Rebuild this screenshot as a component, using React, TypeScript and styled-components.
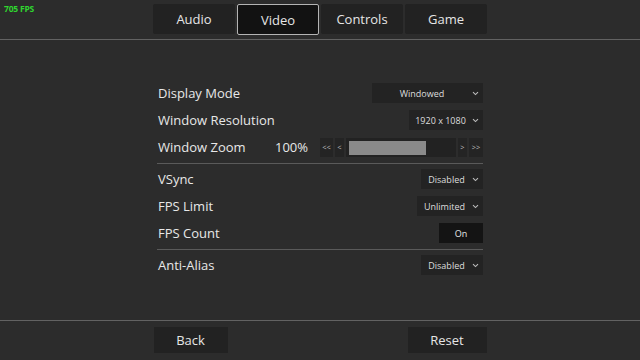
import React from "react";
import styled, { createGlobalStyle } from "styled-components";

const GlobalStyle = createGlobalStyle`
  html, body { margin: 0; padding: 0; background: #2c2c2c; }
  body { font-family: "Open Sans", "Noto Sans", sans-serif; color: #e6e6e6; }
  * { box-sizing: border-box; }
`;

const Screen = styled.div`
  position: relative;
  width: 640px;
  height: 360px;
  display: flex;
  flex-direction: column;
  background: #2c2c2c;
  overflow: hidden;
`;

const FpsCounter = styled.div`
  position: absolute;
  top: 3px;
  left: 4px;
  font-size: 8.5px;
  font-weight: 700;
  color: #2fd62f;
  letter-spacing: -0.2px;
`;

const Header = styled.header`
  height: 40px;
  padding-top: 4px;
  display: flex;
  justify-content: center;
  align-items: flex-start;
  gap: 2px;
  border-bottom: 1px solid #626262;
`;

const Tab = styled.div<{ $active?: boolean }>`
  width: 82px;
  height: ${(p) => (p.$active ? "31px" : "30px")};
  display: flex;
  align-items: center;
  justify-content: center;
  font-size: 13px;
  color: #e6e6e6;
  background: ${(p) => (p.$active ? "#121212" : "#222222")};
  border: ${(p) => (p.$active ? "1px solid #b4b4b4" : "1px solid transparent")};
  border-radius: 2px;
`;

const Main = styled.main`
  flex: 1;
  display: flex;
  align-items: center;
  justify-content: center;
  padding-bottom: 2px;
`;

const SettingsList = styled.div`
  width: 326px;
  display: flex;
  flex-direction: column;
`;

const Row = styled.div`
  height: 27px;
  display: flex;
  align-items: center;
`;

const Label = styled.span`
  flex: 1;
  font-size: 13px;
  color: #e8e8e8;
  padding-left: 1px;
`;

const Separator = styled.div`
  height: 1px;
  margin: 2px 0;
  background: #5a5a5a;
`;

const Dropdown = styled.div<{ $width: number }>`
  width: ${(p) => p.$width}px;
  height: 20px;
  display: flex;
  align-items: center;
  background: #232323;
  padding-right: 4px;
`;

const DropdownValue = styled.span`
  flex: 1;
  text-align: center;
  font-size: 9px;
  color: #dedede;
`;

const Chevron = styled.svg`
  width: 7px;
  height: 5px;
  flex: none;
`;

const ToggleButton = styled.div`
  width: 44px;
  height: 20px;
  display: flex;
  align-items: center;
  justify-content: center;
  font-size: 9px;
  background: #141414;
  color: #e6e6e6;
`;

const Percent = styled.span`
  font-size: 13px;
  color: #e8e8e8;
  margin-right: 12px;
`;

const ZoomControls = styled.div`
  display: flex;
  align-items: center;
  gap: 2px;
`;

const StepButton = styled.div<{ $width: number }>`
  width: ${(p) => p.$width}px;
  height: 19px;
  display: flex;
  align-items: center;
  justify-content: center;
  font-size: 7.5px;
  color: #bdbdbd;
  background: #242424;
`;

const Track = styled.div`
  width: 110px;
  height: 19px;
  padding: 3px 2px 2px 3px;
  background: #222222;
  display: flex;
`;

const Fill = styled.div`
  height: 100%;
  background: #8a8a8a;
`;

const Footer = styled.footer`
  height: 40px;
  border-top: 1px solid #626262;
  display: flex;
  justify-content: center;
  padding-top: 6px;
`;

const FooterInner = styled.div`
  width: 333px;
  display: flex;
  justify-content: space-between;
  align-items: flex-start;
`;

const FooterButton = styled.div<{ $width: number }>`
  width: ${(p) => p.$width}px;
  height: 26px;
  display: flex;
  align-items: center;
  justify-content: center;
  font-size: 13px;
  color: #e6e6e6;
  background: #222222;
`;

const ChevronIcon = () => (
  <Chevron viewBox="0 0 7 5">
    <polyline points="1,1.2 3.5,3.6 6,1.2" fill="none" stroke="#bbbbbb" strokeWidth="1.1" />
  </Chevron>
);

const Select = ({ value, width }: { value: string; width: number }) => (
  <Dropdown $width={width}>
    <DropdownValue>{value}</DropdownValue>
    <ChevronIcon />
  </Dropdown>
);

export default function App() {
  const zoomFill = 73;
  return (
    <>
      <GlobalStyle />
      <Screen>
        <FpsCounter>705 FPS</FpsCounter>
        <Header>
          <Tab>Audio</Tab>
          <Tab $active>Video</Tab>
          <Tab>Controls</Tab>
          <Tab>Game</Tab>
        </Header>
        <Main>
          <SettingsList>
            <Row>
              <Label>Display Mode</Label>
              <Select value="Windowed" width={111} />
            </Row>
            <Row>
              <Label>Window Resolution</Label>
              <Select value="1920 x 1080" width={74} />
            </Row>
            <Row>
              <Label>Window Zoom</Label>
              <Percent>100%</Percent>
              <ZoomControls>
                <StepButton $width={13}>&lt;&lt;</StepButton>
                <StepButton $width={9}>&lt;</StepButton>
                <Track>
                  <Fill style={{ width: `${zoomFill}%` }} />
                </Track>
                <StepButton $width={9}>&gt;</StepButton>
                <StepButton $width={14}>&gt;&gt;</StepButton>
              </ZoomControls>
            </Row>
            <Separator />
            <Row>
              <Label>VSync</Label>
              <Select value="Disabled" width={62} />
            </Row>
            <Row>
              <Label>FPS Limit</Label>
              <Select value="Unlimited" width={66} />
            </Row>
            <Row>
              <Label>FPS Count</Label>
              <ToggleButton>On</ToggleButton>
            </Row>
            <Separator />
            <Row>
              <Label>Anti-Alias</Label>
              <Select value="Disabled" width={62} />
            </Row>
          </SettingsList>
        </Main>
        <Footer>
          <FooterInner>
            <FooterButton $width={74}>Back</FooterButton>
            <FooterButton $width={79}>Reset</FooterButton>
          </FooterInner>
        </Footer>
      </Screen>
    </>
  );
}
